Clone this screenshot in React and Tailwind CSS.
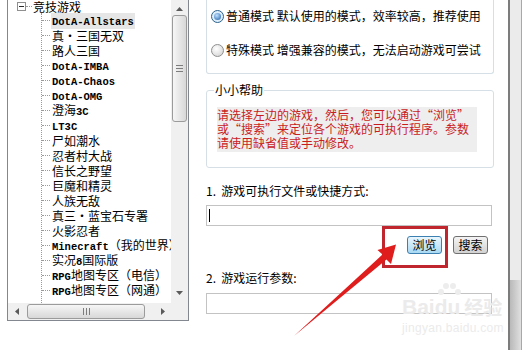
const games = [
  "DotA-Allstars",
  "真・三国无双",
  "路人三国",
  "DotA-IMBA",
  "DotA-Chaos",
  "DotA-OMG",
  "澄海3C",
  "LT3C",
  "尸如潮水",
  "忍者村大战",
  "信长之野望",
  "巨魔和精灵",
  "人族无敌",
  "真三・蓝宝石专署",
  "火影忍者",
  "Minecraft（我的世界）",
  "实况8国际版",
  "RPG地图专区（电信）",
  "RPG地图专区（网通）",
  "WAR III",
];

// ascii runs get the narrow mono face, like SimSun's half-width glyphs
function Mixed({ text }) {
  const parts = text.match(/[\x00-\x7f]+|[^\x00-\x7f]+/g) || [];
  return parts.map((p, i) =>
    /^[\x00-\x7f]+$/.test(p) ? (
      <span key={i} className="font-['Liberation_Mono',monospace] text-[10.5px] font-semibold">
        {p}
      </span>
    ) : (
      <span key={i}>{p}</span>
    )
  );
}

function Arrow({ dir }) {
  const pts = {
    up: "0,4 3.5,0 7,4",
    down: "0,0 3.5,4 7,0",
    left: "4,0 0,3.5 4,7",
    right: "0,0 4,3.5 0,7",
  }[dir];
  const vertical = dir === "up" || dir === "down";
  return (
    <svg width={vertical ? 7 : 4} height={vertical ? 4 : 7}>
      <polygon points={pts} fill="#5a5a5a" />
    </svg>
  );
}

function VScroll() {
  return (
    <div className="flex w-[17px] shrink-0 flex-col bg-[#f0f0f0]">
      <div className="flex h-[15px] items-center justify-center pt-[2px]">
        <Arrow dir="up" />
      </div>
      <div className="mx-px flex h-[107px] flex-col items-center justify-center gap-[2px] rounded-[3px] border border-[#9b9b9b] bg-linear-to-r from-[#f6f6f6] to-[#d8d8d8]">
        <span className="h-px w-[7px] bg-[#7d7d7d]" />
        <span className="h-px w-[7px] bg-[#7d7d7d]" />
        <span className="h-px w-[7px] bg-[#7d7d7d]" />
      </div>
      <div className="flex-1" />
      <div className="flex h-[17px] items-center justify-center pb-[4px]">
        <Arrow dir="down" />
      </div>
    </div>
  );
}

function HScroll() {
  return (
    <div className="flex h-[17px] shrink-0 bg-[#f0f0f0]">
      <div className="flex w-[17px] items-center justify-center">
        <Arrow dir="left" />
      </div>
      <div className="my-px ml-[2px] flex w-[118px] items-center justify-center gap-[2px] rounded-[3px] border border-[#9b9b9b] bg-linear-to-b from-[#f6f6f6] to-[#d8d8d8]">
        <span className="h-[7px] w-px bg-[#7d7d7d]" />
        <span className="h-[7px] w-px bg-[#7d7d7d]" />
        <span className="h-[7px] w-px bg-[#7d7d7d]" />
      </div>
      <div className="flex-1" />
      <div className="flex w-[17px] items-center justify-center">
        <Arrow dir="right" />
      </div>
      <div className="w-[17px] bg-[#f0f0f0]" />
    </div>
  );
}

function GameTree() {
  return (
    <div className="w-[196px] shrink-0 pl-[7px]">
      <div className="flex h-[321px] w-[182px] flex-col border-x border-b border-[#828790] bg-white">
        <div className="flex min-h-0 flex-1">
          <div className="w-[163px] overflow-hidden text-[12px] text-black">
            <div className="flex h-[13px] items-center pl-[9px]">
              <span className="flex h-[9px] w-[9px] items-center justify-center border border-[#8f8f8f] bg-white">
                <span className="h-px w-[5px] bg-[#2a2a2a]" />
              </span>
              <span className="w-[6px] border-t border-dotted border-[#9a9a9a]" />
              <span className="ml-px whitespace-nowrap leading-[13px]">竞技游戏</span>
            </div>
            <div className="ml-[33px] border-l border-dotted border-[#9a9a9a]">
              {games.map((g, i) => (
                <div key={i} className="flex h-[15px] items-center">
                  <span className="w-[8px] shrink-0 border-t border-dotted border-[#9a9a9a]" />
                  <span
                    className={
                      i === 0
                        ? "ml-px whitespace-nowrap bg-[#e6e6e6] px-px leading-[13px]"
                        : "ml-[2px] whitespace-nowrap leading-[13px]"
                    }
                  >
                    <Mixed text={g} />
                  </span>
                </div>
              ))}
            </div>
          </div>
          <VScroll />
        </div>
        <HScroll />
      </div>
    </div>
  );
}

function Radio({ checked, label }) {
  return (
    <div className="flex h-[14px] items-center">
      {checked ? (
        <span className="flex h-[13px] w-[13px] items-center justify-center rounded-full border border-[#2c628b] bg-[#dfeefb]">
          <span className="h-[7px] w-[7px] rounded-full bg-[radial-gradient(circle_at_40%_35%,#bfe0ff,#1d5ea8)]" />
        </span>
      ) : (
        <span className="h-[13px] w-[13px] rounded-full border border-[#8e8f8f] bg-[radial-gradient(circle_at_40%_35%,#ffffff,#cfcfcf)]" />
      )}
      <span className="ml-[2px] whitespace-nowrap leading-[14px]">{label}</span>
    </div>
  );
}

function SettingsPanel() {
  return (
    <div className="w-[312px] shrink-0 pl-[10px] text-[12px] text-black">
      <div className="flex h-[74px] w-[288px] flex-col gap-[20px] rounded-b-[3px] border-x border-b border-[#d5dfe5] pl-[4px] pt-[9px]">
        <Radio checked label="普通模式 默认使用的模式，效率较高，推荐使用" />
        <Radio label="特殊模式 增强兼容的模式，无法启动游戏可尝试" />
      </div>

      <fieldset className="mt-[8px] w-[288px] rounded-[3px] border border-[#d5dfe5] pb-[15px]">
        <legend className="ml-[7px] px-px leading-[16px]">小小帮助</legend>
        <div className="ml-[10px] mt-[9px] h-[45px] w-[260px] whitespace-nowrap bg-[#eeeeee] pt-px leading-[14px] text-[#c91d1d]">
          请选择左边的游戏，然后，您可以通过“浏览”
          <br />
          或“搜索”来定位各个游戏的可执行程序。参数
          <br />
          请使用缺省值或手动修改。
        </div>
      </fieldset>

      <div className="mt-[16px] leading-[14px]">1.&nbsp;&nbsp;游戏可执行文件或快捷方式:</div>
      <div className="mt-[7px] flex h-[21px] w-[286px] items-center border border-[#c3c3c3] bg-white">
        <span className="ml-[2px] h-[13px] w-px bg-black" />
      </div>

      <div className="mt-[10px] flex w-[288px] justify-end gap-[11px] pr-[6px]">
        <button className="h-[18px] w-[35px] rounded-[3px] border border-[#3c7fb1] bg-linear-to-b from-[#eaf6fd] to-[#a9d9f4] text-[12px] leading-[16px]">
          浏览
        </button>
        <button className="h-[18px] w-[35px] rounded-[3px] border border-[#707070] bg-linear-to-b from-[#f4f4f4] to-[#d2d2d2] text-[12px] leading-[16px]">
          搜索
        </button>
      </div>

      <div className="mt-[17px] leading-[14px]">2.&nbsp;&nbsp;游戏运行参数:</div>
      <div className="mt-[8px] h-[21px] w-[286px] border border-[#c3c3c3] bg-white" />
    </div>
  );
}

function WindowEdge() {
  return (
    <div className="flex w-[18px] shrink-0">
      <div className="flex w-[14px] flex-col border-l-2 border-r border-l-[#7c7c7c] border-r-[#a8a8a8]">
        <div className="flex-1 bg-[#ebebeb]" />
        <div className="h-[70px] bg-linear-to-r from-[#b9b9b9] to-[#e0e0e0]" />
      </div>
      <div className="flex-1 bg-white" />
    </div>
  );
}

export default function App() {
  return (
    <div className="relative flex h-[350px] w-[526px] overflow-hidden bg-white font-['Noto_Sans_CJK_SC',sans-serif]">
      <GameTree />
      <SettingsPanel />
      <WindowEdge />

      {/* watermark */}
      <div className="pointer-events-none absolute left-[402px] top-[296px] text-[#ebebeb]">
        <div className="flex items-end font-['Liberation_Sans',sans-serif] text-[21px] font-bold leading-[22px]">
          <span>Bai</span>
          <span className="relative">
            <svg className="absolute -top-[14px] left-[1px]" width="26" height="16">
              <circle cx="5" cy="10" r="3" fill="#ededed" />
              <circle cx="10" cy="4" r="3" fill="#ededed" />
              <circle cx="17" cy="4" r="3" fill="#ededed" />
              <circle cx="22" cy="10" r="3" fill="#ededed" />
            </svg>
            du
          </span>
          <span className="ml-[4px] font-['Noto_Sans_CJK_SC',sans-serif] text-[19px]">经验</span>
        </div>
        <div className="mt-[4px] font-['Liberation_Sans',sans-serif] text-[12px] leading-[12px] tracking-[0.3px]">
          jingyan.baidu.com
        </div>
      </div>

      {/* annotation: red frame + arrow */}
      <div className="pointer-events-none absolute left-[382px] top-[226px] h-[42px] w-[66px] border-[3px] border-[#c0262d]" />
      <svg className="pointer-events-none absolute left-0 top-0" width="526" height="350">
        <polygon
          points="294,336 382.5,254.5 377.5,250 396,244.5 391,264 386.5,259.5"
          fill="#e01d1d"
        />
      </svg>
    </div>
  );
}
